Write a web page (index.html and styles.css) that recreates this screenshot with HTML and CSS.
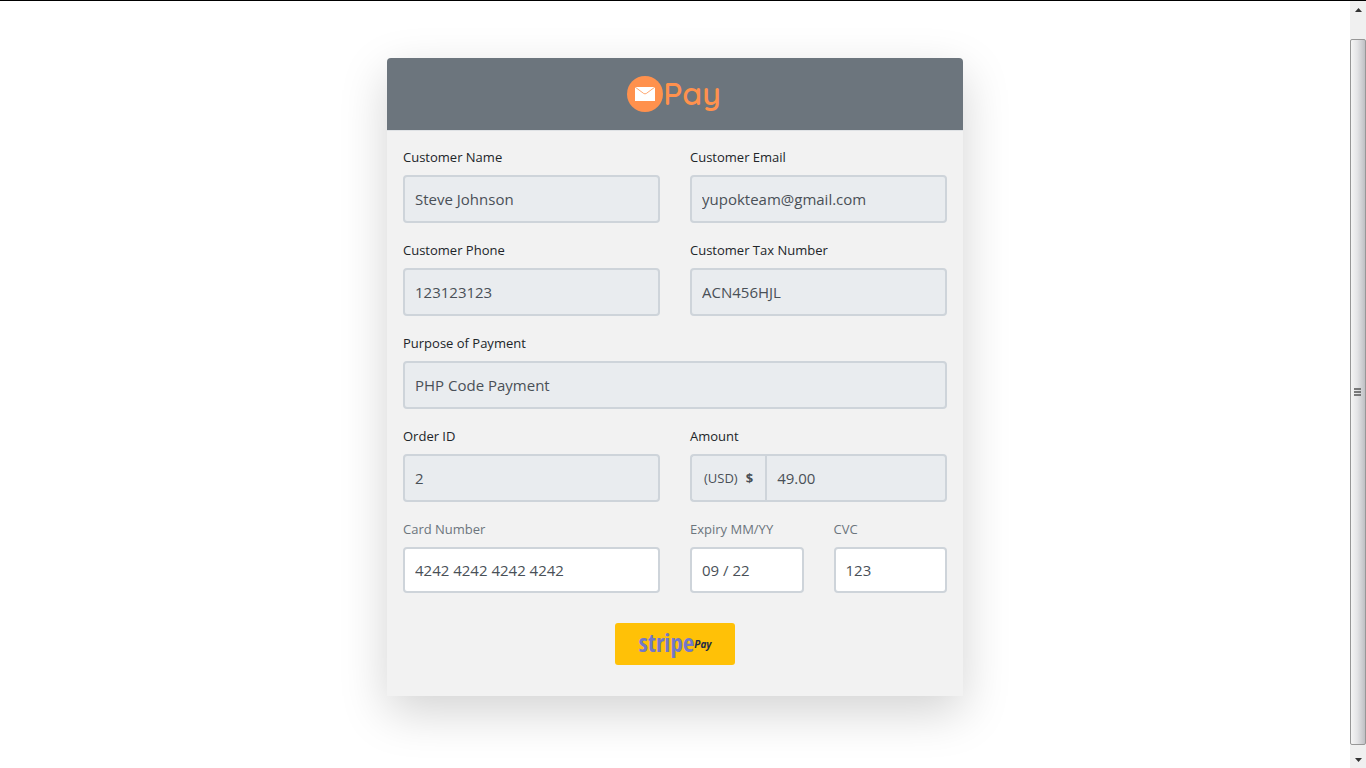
FILE: index.html
```html
<!DOCTYPE html>
<html lang="en">
<head>
    <meta charset="UTF-8">
    <meta name="viewport" content="width=device-width, initial-scale=1.0">
    <title>Pay</title>
    <link rel="stylesheet" href="styles.css">
</head>
<body>

<main class="page">
    <form class="card">
        <header class="card-header">
            <svg class="logo" width="36" height="36" viewBox="0 0 36 36" aria-hidden="true">
                <circle cx="18" cy="18" r="18" fill="#ff914d"/>
                <rect x="8" y="11" width="20" height="14" fill="#fff"/>
                <path d="M8 11l8.600 6.400q1.400 1 2.800 0L28 11" fill="none" stroke="#ff914d" stroke-width=".8"/>
            </svg>
            <span class="brand">Pay</span>
        </header>

        <div class="card-body">
            <div class="form-group">
                <label for="name">Customer Name</label>
                <input id="name" type="text" value="Steve Johnson" readonly>
            </div>
            <div class="form-group">
                <label for="email">Customer Email</label>
                <input id="email" type="email" value="yupokteam@gmail.com" readonly>
            </div>
            <div class="form-group">
                <label for="phone">Customer Phone</label>
                <input id="phone" type="text" value="123123123" readonly>
            </div>
            <div class="form-group">
                <label for="tax">Customer Tax Number</label>
                <input id="tax" type="text" value="ACN456HJL" readonly>
            </div>
            <div class="form-group wide">
                <label for="purpose">Purpose of Payment</label>
                <input id="purpose" type="text" value="PHP Code Payment" readonly>
            </div>
            <div class="form-group">
                <label for="order">Order ID</label>
                <input id="order" type="text" value="2" readonly>
            </div>
            <div class="form-group">
                <label for="amount">Amount</label>
                <div class="input-group">
                    <span class="prepend">(USD) <b>$</b></span>
                    <input id="amount" type="text" value="49.00" readonly>
                </div>
            </div>
            <div class="form-group payment">
                <label for="card">Card Number</label>
                <input id="card" type="text" value="4242 4242 4242 4242">
            </div>
            <div class="split">
                <div class="form-group payment">
                    <label for="expiry">Expiry MM/YY</label>
                    <input id="expiry" type="text" value="09 / 22">
                </div>
                <div class="form-group payment">
                    <label for="cvc">CVC</label>
                    <input id="cvc" type="text" value="123">
                </div>
            </div>
        </div>

        <div class="actions">
            <button class="pay-button" type="submit"><span class="stripe">stripe</span><span class="stripe-pay">Pay</span></button>
        </div>
    </form>
</main>

<div class="scrollbar" aria-hidden="true">
    <svg class="arrow" width="16" height="17" viewBox="0 0 16 17"><path d="M5 11h7L8.500 7z" fill="#333"/></svg>
    <div class="track">
        <div class="thumb">
            <svg width="8" height="8" viewBox="0 0 8 8"><path d="M0 1h7M0 4h7M0 7h7" stroke="#555" stroke-width="1.500"/></svg>
        </div>
    </div>
    <svg class="arrow" width="16" height="17" viewBox="0 0 16 17"><path d="M5 7h7l-3.500 4z" fill="#333"/></svg>
</div>

</body>
</html>
```
FILE: styles.css
```css
* {
    box-sizing: border-box;
}
body {
    display: flex;
    min-height: 100vh;
    margin: 0;
    border-top: 1px solid #000;
    background: #fff;
    color: #212529;
    font-family: "Segoe UI", "Open Sans", "Noto Sans", sans-serif;
    font-size: 13px;
}
.page {
    flex: 1;
    min-width: 0;
    padding: 57px 16px;
}
.card {
    max-width: 576px;
    margin: 0 auto;
    background: #f2f2f2;
    border-radius: 4px 4px 0 0;
    box-shadow: 0 16px 48px rgba(0, 0, 0, .175);
}
.card-header {
    display: flex;
    align-items: center;
    justify-content: center;
    height: 72px;
    padding-right: 2px;
    background: #6c757d;
    border-radius: 4px 4px 0 0;
}
.brand {
    color: #ff914d;
    font-family: Quicksand, Lato, sans-serif;
    font-size: 32px;
    font-weight: 600;
    line-height: 36px;
    padding-bottom: 2px;
}
.card-body {
    display: grid;
    grid-template-columns: 1fr 1fr;
    gap: 16px 30px;
    padding: 15px 16px 16px;
    border-top: 1px solid #dfe2e5;
}
.wide {
    grid-column: 1 / -1;
}
.split {
    display: grid;
    grid-template-columns: 1fr 1fr;
    gap: 30px;
}
label {
    display: block;
    margin-bottom: 6px;
    line-height: 23px;
}
input {
    display: block;
    width: 100%;
    min-width: 0;
    height: 48px;
    padding: 0 10px;
    border: 2px solid #ced4da;
    border-radius: 4px;
    background: #fff;
    color: #495057;
    font-family: inherit;
    font-size: 15px;
}
input[readonly] {
    background: #e9ecef;
}
.payment label {
    color: #6c757d;
}
.payment input {
    height: 46px;
}
.input-group {
    display: flex;
}
.input-group input {
    flex: 1;
    border-radius: 0 4px 4px 0;
}
.prepend {
    display: flex;
    align-items: center;
    gap: 8px;
    padding: 0 12px;
    border: 2px solid #ced4da;
    border-right: 0;
    border-radius: 4px 0 0 4px;
    background: #e9ecef;
    color: #495057;
}
.actions {
    padding: 14px 16px 31px;
    text-align: center;
}
.pay-button {
    display: inline-flex;
    align-items: center;
    justify-content: center;
    width: 120px;
    height: 42px;
    padding: 0;
    border: 0;
    border-radius: 3px;
    background: #ffc107;
    vertical-align: top;
    cursor: pointer;
}
.stripe {
    padding-bottom: 4px;
    color: #7378c8;
    font: 700 25px/36px "Open Sans Condensed", "Liberation Sans Narrow", Roboto, sans-serif;
}
.stripe-pay {
    color: #222b45;
    font: italic 700 10px/40px "Open Sans", sans-serif;
}
.scrollbar {
    display: flex;
    flex-direction: column;
    flex: 0 0 16px;
    background: #f0f0f0;
}
.arrow {
    display: block;
}
.track {
    display: flex;
    flex: 1;
    padding: 21px 0 6px;
}
.thumb {
    display: flex;
    flex: 1;
    align-items: center;
    justify-content: center;
    border: 1px solid #979797;
    border-radius: 2px;
    background: linear-gradient(90deg, #f5f5f5, #e4e4e6 45%, #bfc0c4);
}
```
